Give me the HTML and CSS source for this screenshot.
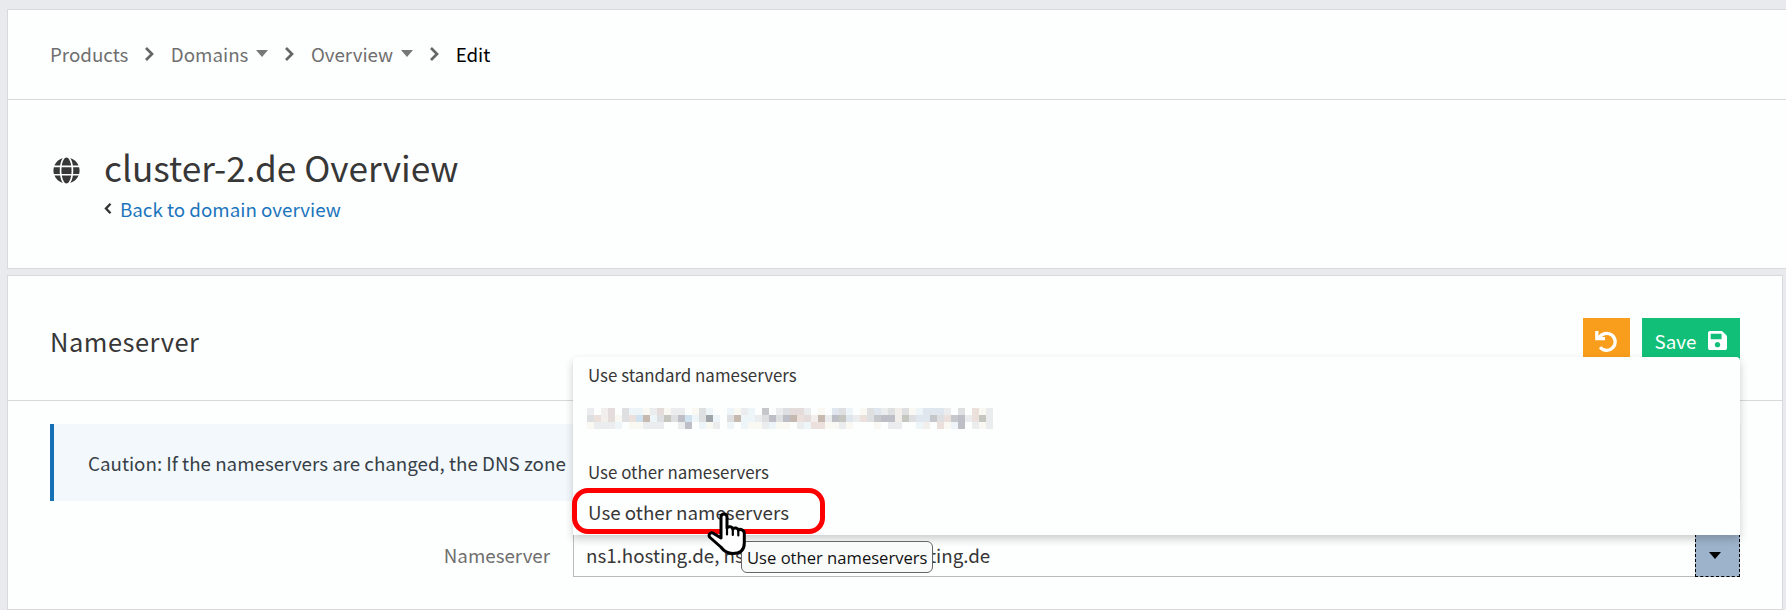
FILE: index.html
```
<!DOCTYPE html>
<html lang="en"><head><meta charset="utf-8"><title>cluster-2.de Overview</title><link rel="stylesheet" href="styles.css"></head>
<body>
<section class="panel intro">
  <nav class="crumbs">
    <span class="c1">Products</span><svg class="chev" viewBox="0 0 10 14"><path d="M2 1l6 6-6 6"/></svg>
    <span class="c2">Domains</span><i class="caret"></i><svg class="chev" viewBox="0 0 10 14"><path d="M2 1l6 6-6 6"/></svg>
    <span class="c3">Overview</span><i class="caret"></i><svg class="chev" viewBox="0 0 10 14"><path d="M2 1l6 6-6 6"/></svg>
    <span class="current">Edit</span>
  </nav>
  <header class="title">
    <svg class="globe" viewBox="0 0 496 512"><path d="M336.5 160C322 70.700 287.800 8 248 8s-74 62.700-88.500 152h177zM152 256c0 22.200 1.200 43.500 3.300 64h185.300c2.100-20.500 3.300-41.800 3.300-64s-1.200-43.500-3.300-64H155.300c-2.100 20.500-3.300 41.800-3.300 64zm324.700-96c-28.600-67.900-86.500-120.400-158-141.600 24.400 33.800 41.200 84.700 50 141.600h108zM177.200 18.400C105.800 39.600 47.800 92.100 19.300 160h108c8.700-56.900 25.500-107.800 49.900-141.600zM487.400 192H372.700c2.100 21 3.300 42.500 3.300 64s-1.200 43-3.300 64h114.600c5.500-20.500 8.600-41.800 8.600-64s-3.100-43.500-8.500-64zM120 256c0-21.500 1.200-43 3.300-64H8.600C3.200 212.500 0 233.800 0 256s3.200 43.500 8.600 64h114.600c-2-21-3.200-42.500-3.200-64zm39.500 96c14.500 89.300 48.700 152 88.500 152s74-62.700 88.500-152h-177zm159.300 141.600c71.400-21.200 129.400-73.700 158-141.600h-108c-8.800 56.900-25.600 107.800-50 141.600zM19.300 352c28.600 67.900 86.500 120.400 158 141.600-24.400-33.800-41.200-84.700-50-141.600h-108z"/></svg>
    <div>
      <h1>cluster-2.de Overview</h1>
      <div class="back"><svg viewBox="0 0 8 12"><path d="M6.500 1.200L2 6l4.500 4.800"/></svg><a>Back to domain overview</a></div>
    </div>
  </header>
</section>
<section class="panel ns">
  <header class="ns-head">
    <h2>Nameserver</h2>
    <div class="actions">
      <button class="undo"><svg viewBox="0 0 24 24"><path d="M5.500 18.800A9.300 9.300 0 1 0 4.500 8.500" /><path d="M2 1v8.500h9" /></svg></button>
      <button class="save">Save <svg viewBox="0 0 448 512"><path d="M433.900 129.900l-83.900-83.900A48 48 0 0 0 316.100 32H48C21.500 32 0 53.500 0 80v352c0 26.500 21.500 48 48 48h352c26.500 0 48-21.500 48-48V163.900a48 48 0 0 0-14.100-34zM224 416c-35.300 0-64-28.700-64-64s28.700-64 64-64 64 28.700 64 64-28.700 64-64 64zm96-304.500V212c0 6.600-5.400 12-12 12H76c-6.600 0-12-5.400-12-12V108c0-6.600 5.400-12 12-12h228.500c3.200 0 6.200 1.300 8.500 3.500l3.500 3.500a12 12 0 0 1 3.500 8.500z" transform="translate(0 -10)"/></svg></button>
    </div>
  </header>
  <div class="notice"><span>Caution: If the nameservers are changed, the DNS zone</span></div>
  <div class="field">
    <label>Nameserver</label>
    <div class="select">
      <div class="value"><span class="start">ns1.hosting.de, ns</span><span>ting.de</span></div>
      <div class="toggle"><i></i></div>
      <div class="menu">
        <div class="group">Use standard nameservers</div>
        <svg id="redacted" class="redacted" width="406" height="21" shape-rendering="crispEdges"></svg>
        <div class="group other">Use other nameservers</div>
        <div class="option">Use other nameservers</div>
      </div>
    </div>
  </div>
</section>
<div class="highlight"></div>
<div class="tooltip">Use other nameservers</div>
<svg class="cursor" viewBox="0 0 40 44"><path d="M14 26V5c0-4 6-4 6 0V16c1.200-2 5.500-1.500 5.800 1 1.500-2 5.200-1 5.500 1 2-1.500 6 0 6 3.500V31c0 7.500-4.500 10.500-11.500 10.500-6 0-9-2.500-12-6.500L2.500 25c-1.500-3.500 2-5.500 5-3z"/><path class="fingers" d="M20 15v7.500M25.800 17v6M31.300 18v5.500"/></svg>
<script src="redacted.js"></script>
</body></html>
```
FILE: styles.css
```
* { box-sizing: border-box; }
body { margin: 0; padding: 9px 0 0 7px; width: 1786px; height: 610px; overflow: hidden; background: #e9eaed; color: #373737; font: 18.750px/28px "Noto Sans CJK SC", sans-serif; position: relative; }
h1, h2 { margin: 0; font-weight: 400; }
.panel { background: #fdfefe; border: 1px solid #d7d9db; }
.intro { height: 260px; border-right: 0; }
.crumbs { height: 90px; display: flex; align-items: center; padding: 0 0 2px 42px; border-bottom: 1px solid #d7d9db; color: #6f6f6f; }
.chev { width: 10px; height: 14px; margin: 1px 16.500px 0 16px; fill: none; stroke: #666; stroke-width: 2.700; }
.caret { border: 6.500px solid transparent; border-top: 7px solid #777; border-bottom: 0; margin: 0 0 0 8px; }
.current { color: #000; }
.title { display: flex; padding: 43px 0 0 45px; }
.globe { width: 27px; height: 27px; margin: 14px 24px 0 0; fill: #373737; }
h1 { font-size: 35.200px; line-height: 48px; }
.back { display: flex; align-items: center; margin-top: 4px; }
.back svg { width: 8px; height: 13px; margin: -1px 8px 0 0; fill: none; stroke: #333; stroke-width: 2.400; }
.back a { color: #1b75bc; }
.ns { width: 1776px; height: 335px; margin-top: 6px; }
.ns-head { height: 125px; padding: 42px 42px 0 42px; display: flex; justify-content: space-between; border-bottom: 1px solid #d7d9db; }
h2 { font-size: 25.500px; line-height: 45px; letter-spacing: .5px; }
.actions { display: flex; gap: 12px; }
button { border: 0; height: 46px; padding: 0; color: #fff; font: inherit; display: flex; align-items: center; justify-content: center; }
.undo { width: 47px; background: #f99d1c; }
.undo svg { width: 22px; height: 22px; margin-left: -1px; fill: none; stroke: #fff; stroke-width: 3.600; }
.save { width: 98px; background: #12bf78; gap: 12px; }
.save svg { width: 19px; height: 22px; fill: #fff; }
.notice { margin: 23px 41px 0 42px; height: 77px; display: flex; align-items: center; padding-left: 34px; border-left: 4px solid #1571b3; background: #f2f8fb; white-space: nowrap; color: #373f48; }
.field { display: flex; margin-top: 33px; }
label { width: 542px; text-align: right; line-height: 41px; color: #6f6f6f; }
.select { position: relative; width: 1167px; height: 43px; margin-left: 23px; display: flex; border: 1px solid #bbb; border-right: 0; }
.value { flex: 1; display: flex; padding-left: 12px; line-height: 40px; }
.start { width: 343px; }
.toggle { width: 45px; height: 43px; margin: -1px 0 0; background: #9db3cb; border: 1px dashed #000; display: flex; align-items: center; justify-content: center; padding-right: 6px; }
.toggle i { border: 6.500px solid transparent; border-top: 7px solid #000; border-bottom: 0; }
.menu { position: absolute; left: -1px; bottom: 41px; width: 1167px; height: 178px; background: #fdfefe; border-radius: 4px 4px 0 0; box-shadow: 0 4px 8px rgba(0,0,0,.2); display: flex; flex-direction: column; align-items: flex-start; padding: 4px 0 0 15px; }
.group { font-size: 16.900px; }
.redacted { margin: 19px 0 0 -1px; }
.other { margin-top: 29px; }
.option { margin-top: 12px; }
.highlight { position: absolute; left: 572px; top: 488px; width: 253px; height: 46px; border: 5px solid #f00; border-radius: 16px; }
.tooltip { position: absolute; left: 741px; top: 541px; width: 192px; height: 32px; border: 1px solid #666; border-radius: 6px; background: #f9fbfb; color: #111; font: 16.600px/32px "Open Sans", sans-serif; padding-left: 5px; white-space: nowrap; }
.cursor { position: absolute; left: 707px; top: 512px; width: 40px; height: 44px; fill: #fff; stroke: #000; stroke-width: 3; stroke-linejoin: round; stroke-linecap: round; }
.fingers { stroke-width: 2.200; fill: none; }
```
FILE: redacted.js
```
// Pixelated cover: one letter per 7px cell, a key into the palette.
const palette = {
  a: '#ebecee', b: '#dddfe1', c: '#e3dcdb', d: '#f1eeec', e: '#eef5f8', f: '#faf8f2', g: '#d0e1ef',
  h: '#c6b9af', i: '#c6c6c0', j: '#9fa5a8', k: '#bebec7', l: '#ebe0db', m: '#c6c7ca', n: '#e0e6ed'
};
const rows = [
  'a.dc.beefacfaa.fbe..efae.m.abcca.f.nbe.fbnabdbfennna.b.lfa',
  'bldcfblghebibkgebje.bheeabkbkhlcdhakinalbmkkdibnnmblmkalia',
  'faaae.ffaaa..ak.efa.e.effaeff.aellffaf...f.aa..ed.lfek.afa'
];
const svg = document.getElementById('redacted');
rows.forEach((r, y) => [...r].forEach((c, x) => {
  if (c === '.') return;
  const e = document.createElementNS('http://www.w3.org/2000/svg', 'rect');
  e.setAttribute('x', x * 7); e.setAttribute('y', y * 7); e.setAttribute('width', 7); e.setAttribute('height', 7);
  e.setAttribute('fill', palette[c]); svg.appendChild(e);
}));
```
